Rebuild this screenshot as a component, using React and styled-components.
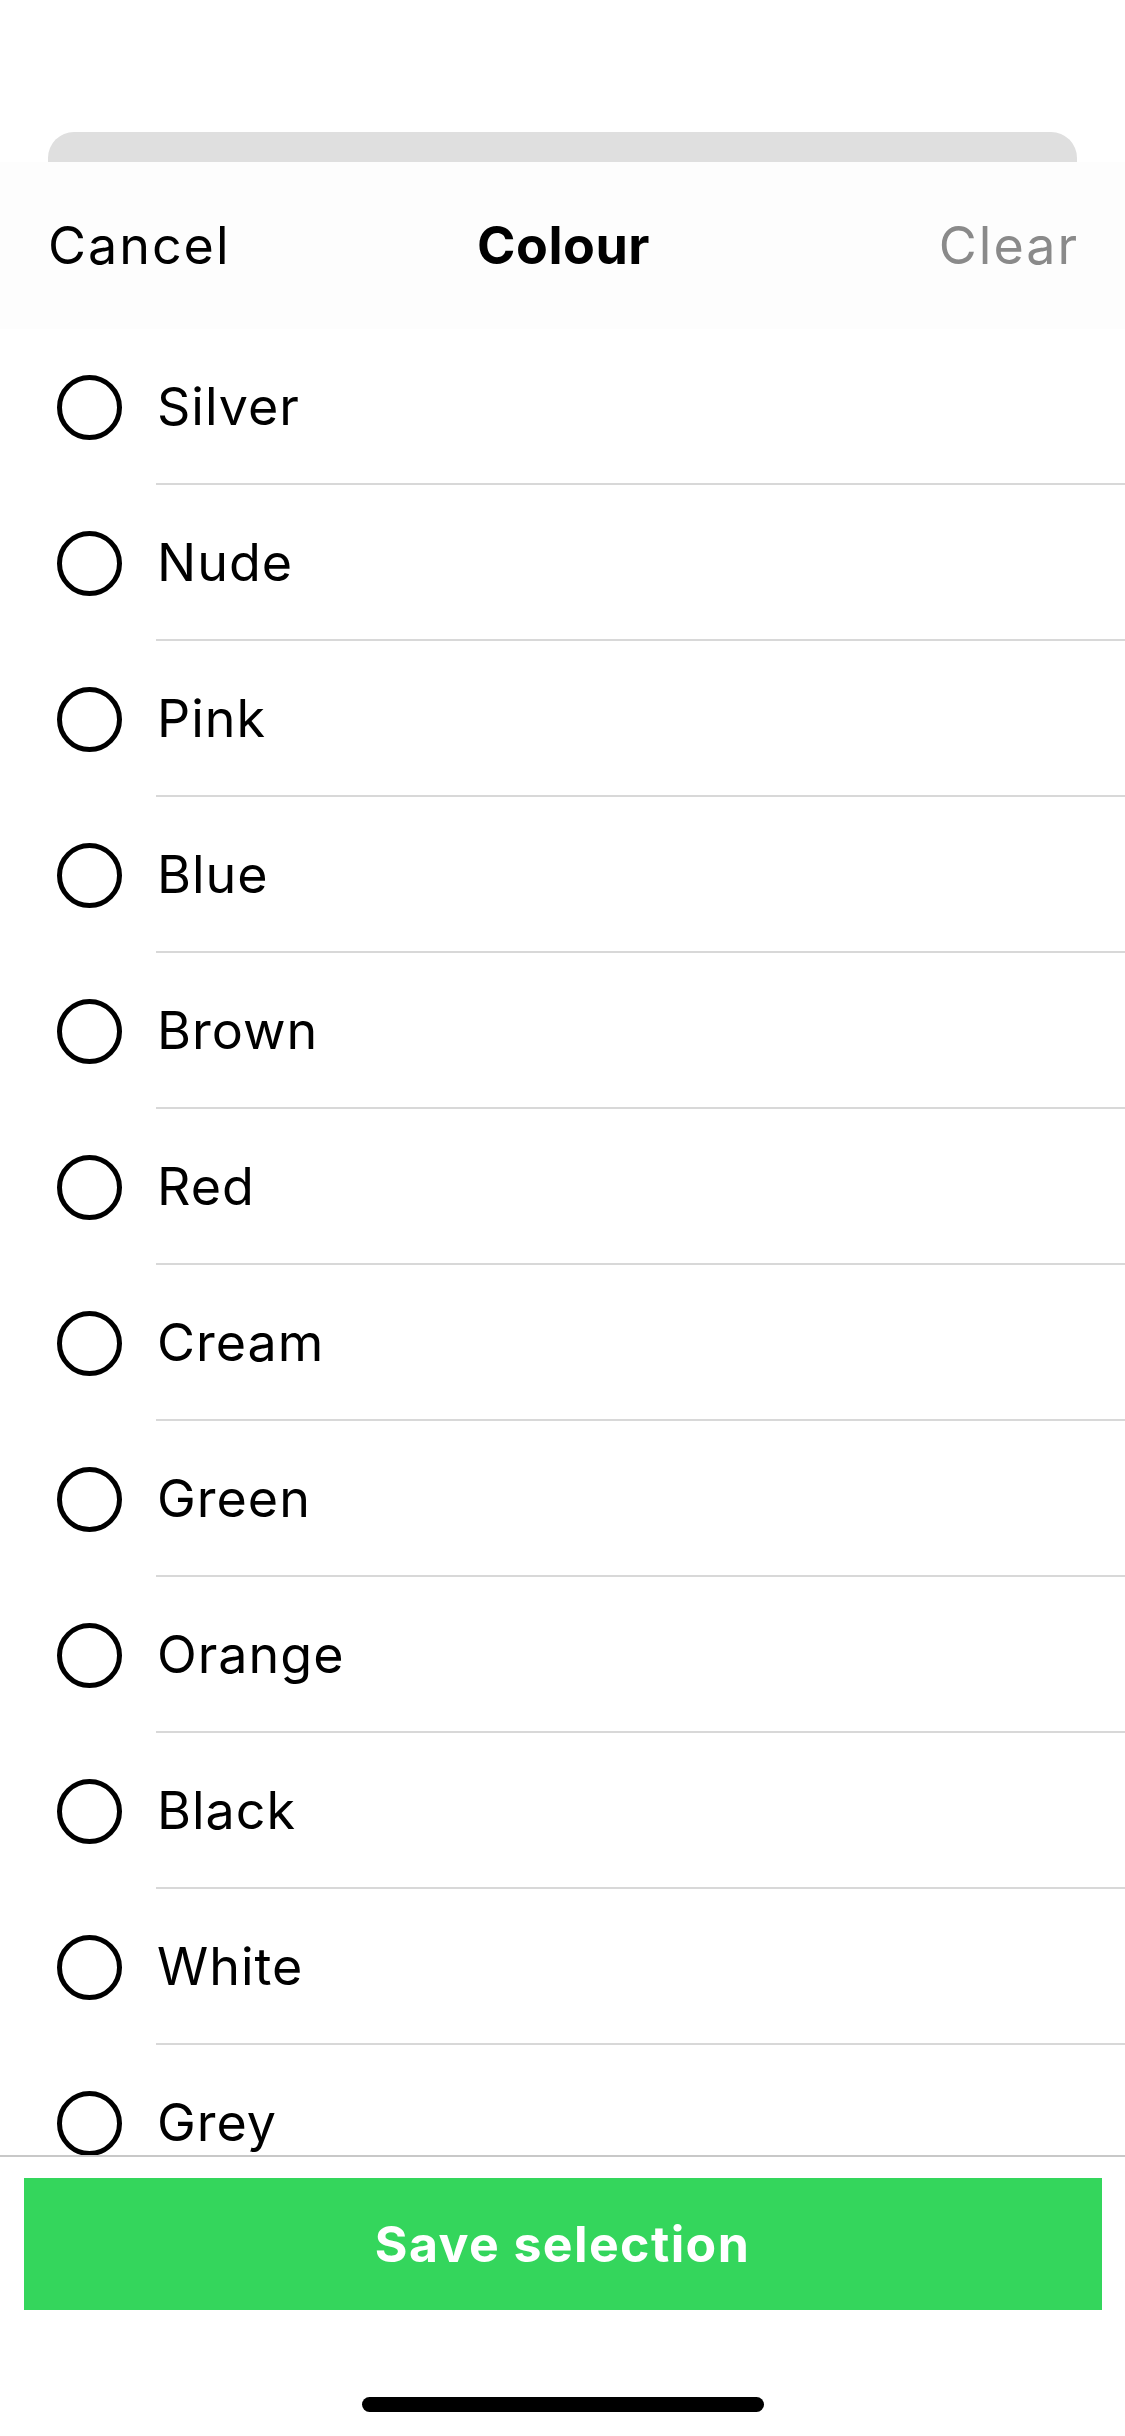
import styled, { createGlobalStyle } from "styled-components";

const colours = [
    "Silver",
    "Nude",
    "Pink",
    "Blue",
    "Brown",
    "Red",
    "Cream",
    "Green",
    "Orange",
    "Black",
    "White",
    "Grey",
];

const GlobalStyle = createGlobalStyle`
    html, body {
        margin: 0;
        padding: 0;
        background: #fff;
    }
    body {
        font-family: "Inter", "Noto Sans", sans-serif;
        color: #000;
    }
`;

const App = () => {
    return (
        <>
            <GlobalStyle />
            <Screen>
                <BackCard />
                <Header>
                    <HeaderAction>Cancel</HeaderAction>
                    <Title>Colour</Title>
                    <HeaderAction $muted>Clear</HeaderAction>
                </Header>
                <List>
                    {colours.map((name) => (
                        <Row key={name}>
                            <Radio />
                            <Label>{name}</Label>
                        </Row>
                    ))}
                </List>
                <Footer>
                    <SaveButton>Save selection</SaveButton>
                    <HomeIndicator />
                </Footer>
            </Screen>
        </>
    );
};

const Screen = styled.div`
    display: flex;
    flex-direction: column;
    height: 2436px;
    width: 1125px;
    overflow: hidden;
    padding-top: 132px;
    box-sizing: border-box;
`;

const BackCard = styled.div`
    height: 30px;
    margin-inline: 48px;
    background: #dfdfdf;
    border-radius: 26px 26px 0 0;
    flex-shrink: 0;
`;

const Header = styled.div`
    display: flex;
    justify-content: space-between;
    align-items: center;
    height: 167px;
    padding-inline: 48px;
    background: #fdfdfd;
    flex-shrink: 0;
`;

const HeaderAction = styled.span`
    font-size: 52px;
    font-weight: 400;
    letter-spacing: 2px;
    color: ${({ $muted }) => ($muted ? "#8a8a8a" : "#000")};
    width: 240px;
    text-align: ${({ $muted }) => ($muted ? "right" : "left")};
    margin-right: ${({ $muted }) => ($muted ? "-2px" : "0")};
`;

const Title = styled.span`
    font-size: 52px;
    font-weight: 700;
    letter-spacing: 0.5px;
`;

const List = styled.div`
    flex: 1;
    overflow: hidden;
`;

const Row = styled.div`
    display: flex;
    align-items: center;
    height: 156px;
    padding-left: 57px;
    gap: 34px;
`;

const Radio = styled.span`
    width: 65px;
    height: 65px;
    box-sizing: border-box;
    border: 5px solid #000;
    border-radius: 50%;
    flex-shrink: 0;
`;

const Label = styled.div`
    flex: 1;
    align-self: stretch;
    display: flex;
    align-items: center;
    padding-left: 1px;
    font-size: 52px;
    letter-spacing: 1px;
    border-bottom: 2px solid #d8d8d8;
`;

const Footer = styled.div`
    display: flex;
    flex-direction: column;
    align-items: center;
    height: 281px;
    flex-shrink: 0;
    border-top: 2px solid #c8c8c8;
    background: #fff;
    box-sizing: border-box;
    padding-top: 21px;
`;

const SaveButton = styled.button`
    width: 1078px;
    height: 132px;
    border: none;
    border-radius: 0;
    background: #34d65c;
    color: #fff;
    font-family: inherit;
    font-size: 50px;
    font-weight: 700;
    letter-spacing: 1.4px;
`;

const HomeIndicator = styled.div`
    width: 402px;
    height: 15px;
    border-radius: 8px;
    background: #000;
    margin-top: 87px;
`;

export default App;
